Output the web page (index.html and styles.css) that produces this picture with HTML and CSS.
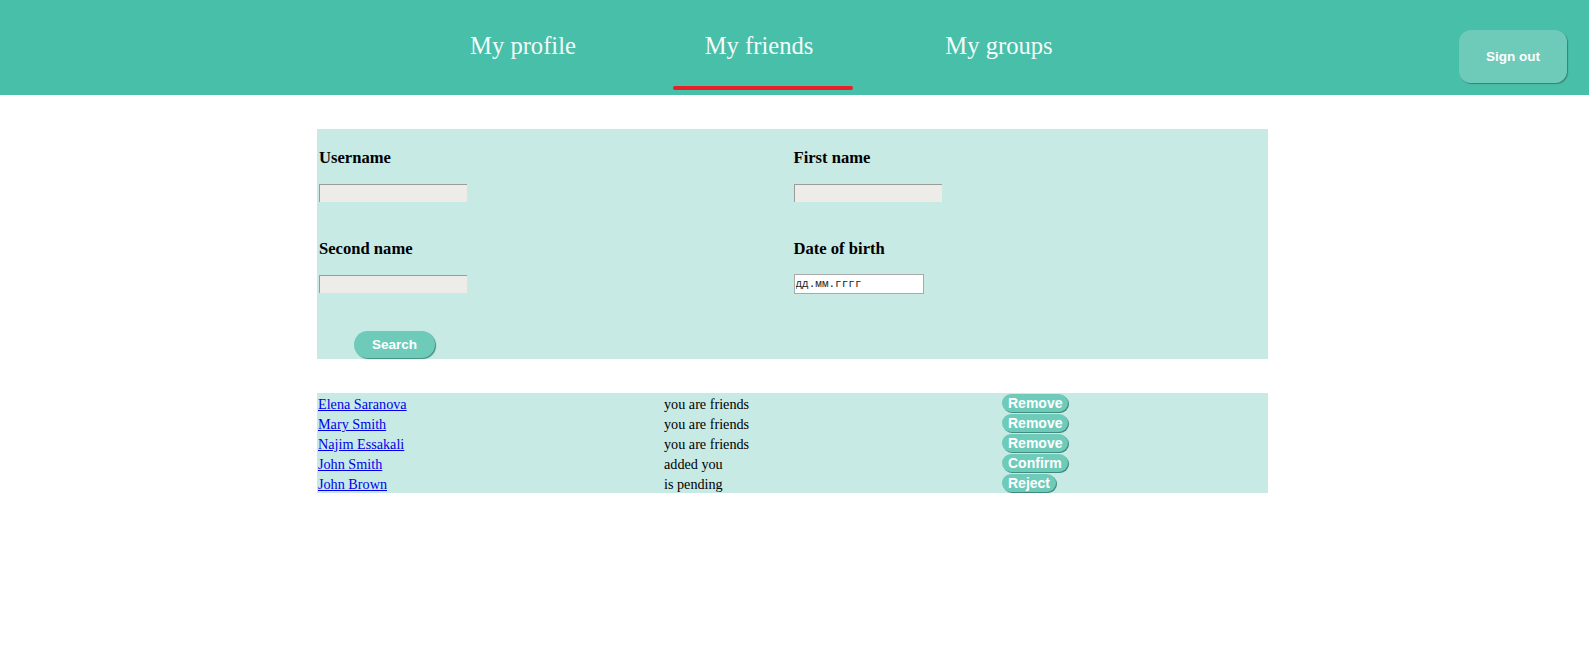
FILE: index.html
```html
<!DOCTYPE html>
<html lang="en">
<head>
<meta charset="utf-8">
<title>My friends</title>
<link rel="stylesheet" href="styles.css">
</head>
<body>
<header class="topbar">
  <nav class="nav">
    <a class="nav-item" href="#"><span class="nav-text">My profile</span></a>
    <a class="nav-item active" href="#"><span class="nav-text">My friends</span><span class="nav-line"></span></a>
    <a class="nav-item" href="#"><span class="nav-text">My groups</span></a>
  </nav>
  <button class="signout">Sign out</button>
</header>

<main class="content">
  <form class="search-form">
    <div class="field">
      <label class="field-label">Username</label>
      <input class="text-input" type="text">
    </div>
    <div class="field">
      <label class="field-label">First name</label>
      <input class="text-input" type="text">
    </div>
    <div class="field">
      <label class="field-label">Second name</label>
      <input class="text-input" type="text">
    </div>
    <div class="field">
      <label class="field-label">Date of birth</label>
      <input class="date-input" type="text" placeholder="дд.мм.гггг">
    </div>
    <div class="actions">
      <button class="search-btn" type="button">Search</button>
    </div>
  </form>

  <div class="friends">
    <div class="row">
      <a class="name" href="#">Elena Saranova</a>
      <span class="status">you are friends</span>
      <span class="cell"><button class="pill">Remove</button></span>
    </div>
    <div class="row">
      <a class="name" href="#">Mary Smith</a>
      <span class="status">you are friends</span>
      <span class="cell"><button class="pill">Remove</button></span>
    </div>
    <div class="row">
      <a class="name" href="#">Najim Essakali</a>
      <span class="status">you are friends</span>
      <span class="cell"><button class="pill">Remove</button></span>
    </div>
    <div class="row">
      <a class="name" href="#">John Smith</a>
      <span class="status">added you</span>
      <span class="cell"><button class="pill">Confirm</button></span>
    </div>
    <div class="row">
      <a class="name" href="#">John Brown</a>
      <span class="status">is pending</span>
      <span class="cell"><button class="pill">Reject</button></span>
    </div>
  </div>
</main>
</body>
</html>
```

FILE: styles.css
```css
html, body {
  margin: 0;
  padding: 0;
  background: #ffffff;
  font-family: "Liberation Serif", "Times New Roman", serif;
  font-size: 16px;
  color: #000;
}

.topbar {
  display: flex;
  height: 95px;
  background: #47bfa9;
}

.nav {
  display: flex;
  gap: 58px;
  padding-left: 433px;
}

.nav-item {
  width: 180px;
  height: 95px;
  display: flex;
  flex-direction: column;
  align-items: center;
  text-decoration: none;
  color: #f4fbf9;
}

.nav-text {
  font-family: "Liberation Serif", "Times New Roman", serif;
  font-size: 24.6px;
  line-height: 30px;
  padding-top: 31px;
}

.active .nav-text {
  padding-right: 4px;
}

.nav-line {
  margin-top: auto;
  margin-bottom: 5px;
  align-self: flex-start;
  margin-left: 2px;
  width: 180px;
  height: 4px;
  border-radius: 2px;
  background: #e8202a;
}

.signout {
  margin-left: auto;
  margin-right: 22px;
  margin-top: 30px;
  align-self: flex-start;
  width: 108px;
  height: 53px;
  border: none;
  border-radius: 12px;
  background: #6ecbba;
  box-shadow: 1px 1px 1px #3d7f73;
  color: #ffffff;
  font-family: "Liberation Sans", Arial, sans-serif;
  font-weight: bold;
  font-size: 13.5px;
  padding: 0;
}

.content {
  padding-top: 34px;
}

.search-form {
  margin: 0 0 0 317px;
  width: 951px;
  box-sizing: border-box;
  background: #c7eae4;
  display: grid;
  grid-template-columns: 1fr 1fr;
  column-gap: 2px;
  padding: 2px 2px 1px 2px;
}

.field {
  display: flex;
  flex-direction: column;
  align-items: flex-start;
  padding-bottom: 20px;
}

.field-label {
  font-weight: bold;
  font-size: 16.6px;
  line-height: 18px;
  margin-top: 18px;
}

.text-input {
  margin-top: 17px;
  width: 148px;
  height: 18px;
  box-sizing: border-box;
  background: #eeece8;
  border: none;
  border-top: 1px solid #9c9c9c;
  border-left: 1px solid #9c9c9c;
  padding: 0;
}

.date-input {
  margin-top: 16px;
  margin-bottom: -1px;
  width: 130px;
  height: 20px;
  box-sizing: border-box;
  background: #ffffff;
  border: 1px solid #a9a9a9;
  padding: 0 1px;
  font-family: "Liberation Mono", "Courier New", monospace;
  font-size: 11px;
}

.date-input::placeholder {
  color: #1a1a1a;
  opacity: 1;
}

.actions {
  grid-column: 1 / 3;
  padding-left: 35px;
  padding-top: 18px;
}

.search-btn {
  display: block;
  width: 81px;
  height: 27px;
  border: none;
  border-radius: 14px;
  background: #6ecbba;
  box-shadow: 1px 1px 1px #3f8a7d;
  color: #ffffff;
  font-family: "Liberation Sans", Arial, sans-serif;
  font-weight: bold;
  font-size: 13.5px;
  padding: 0;
}

.friends {
  margin: 34px 0 0 317px;
  width: 951px;
  background: #c7eae4;
  font-size: 14.2px;
}

.row {
  display: grid;
  grid-template-columns: 346px 339px 1fr;
  height: 20px;
  align-items: center;
  line-height: 18px;
}

.name {
  padding-left: 1px;
  padding-top: 2px;
  color: #0000ee;
  text-decoration: underline;
}

.status {
  padding-left: 1px;
  padding-top: 2px;
}

.cell {
  display: flex;
  align-items: center;
}

.pill {
  height: 18px;
  border: none;
  border-radius: 9px;
  background: #6ecbba;
  box-shadow: 1px 1px 0 #3f8a7d;
  color: #ffffff;
  font-family: "Liberation Sans", Arial, sans-serif;
  font-weight: bold;
  font-size: 14px;
  line-height: 18px;
  padding: 0 6px;
}
```
